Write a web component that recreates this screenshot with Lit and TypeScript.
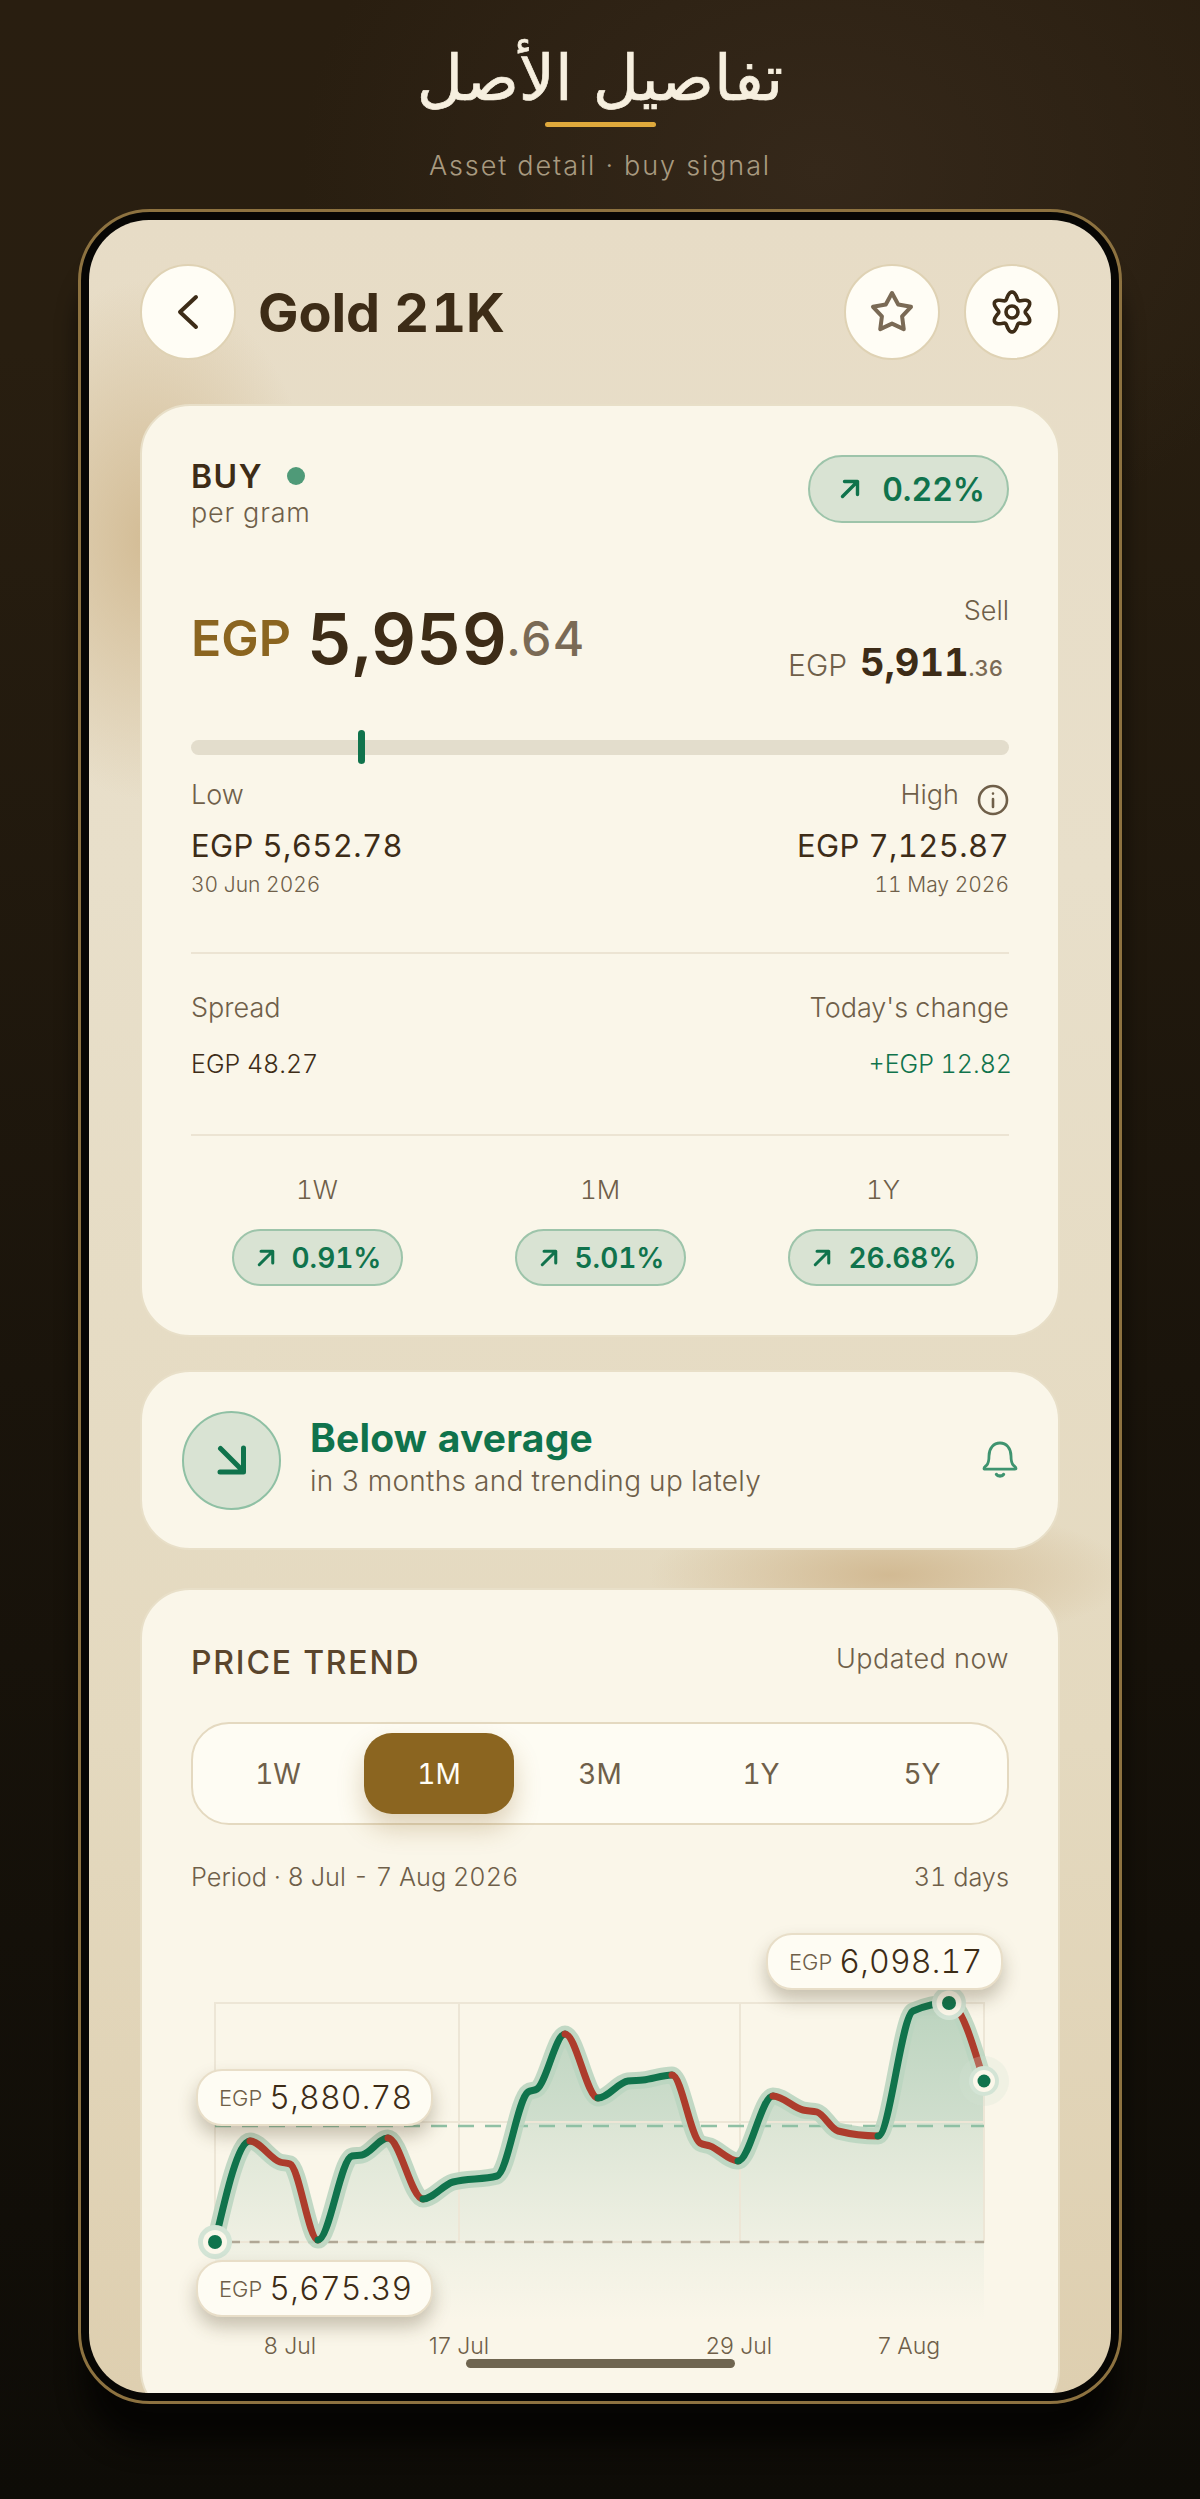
import { customElement } from "lit/decorators.js";
import { css, html, LitElement, svg } from "lit";

type Pt = [number, number];

// chart coordinates are page pixels, the svg viewBox starts at the chart's corner
const CHART_X = 191;
const CHART_Y = 1920;
const CHART_W = 818;
const CHART_H = 450;

const PRICE: Pt[] = [
    [215, 2243], [250, 2142], [280, 2163], [290, 2165], [318, 2241], [352, 2157],
    [362, 2156], [388, 2139], [423, 2200], [453, 2183], [497, 2177], [528, 2093],
    [537, 2090], [565, 2035], [598, 2099], [628, 2082], [643, 2081], [672, 2076],
    [700, 2144], [710, 2147], [738, 2162], [773, 2097], [803, 2111], [817, 2113],
    [838, 2132], [878, 2137], [913, 2012], [949, 2004], [984, 2082],
];

const sign = (v: number) => (v < 0 ? -1 : 1);

function tangents(pts: Pt[]): number[] {
    const out: number[] = new Array(pts.length).fill(0);
    for (let i = 1; i < pts.length - 1; i++) {
        const h0 = pts[i][0] - pts[i - 1][0];
        const h1 = pts[i + 1][0] - pts[i][0];
        const s0 = (pts[i][1] - pts[i - 1][1]) / h0;
        const s1 = (pts[i + 1][1] - pts[i][1]) / h1;
        const p = (s0 * h1 + s1 * h0) / (h0 + h1);
        out[i] = (sign(s0) + sign(s1)) * Math.min(Math.abs(s0), Math.abs(s1), 0.5 * Math.abs(p));
    }
    const n = pts.length - 1;
    out[0] = ((3 * (pts[1][1] - pts[0][1])) / (pts[1][0] - pts[0][0]) - out[1]) / 2;
    out[n] = ((3 * (pts[n][1] - pts[n - 1][1])) / (pts[n][0] - pts[n - 1][0]) - out[n - 1]) / 2;
    return out;
}

function curveTo(pts: Pt[], m: number[], i: number): string {
    const [x0, y0] = pts[i];
    const [x1, y1] = pts[i + 1];
    const d = (x1 - x0) / 3;
    return `C${x0 + d} ${y0 + m[i] * d} ${x1 - d} ${y1 - m[i + 1] * d} ${x1} ${y1}`;
}

const slopes = tangents(PRICE);
const fullLine =
    `M${PRICE[0][0]} ${PRICE[0][1]}` +
    PRICE.slice(0, -1).map((_, i) => curveTo(PRICE, slopes, i)).join("");

// one path per rising or falling run
function runs(): { d: string; up: boolean }[] {
    const out: { d: string; up: boolean }[] = [];
    for (let i = 0; i < PRICE.length - 1; i++) {
        const up = PRICE[i + 1][1] < PRICE[i][1];
        const last = out[out.length - 1];
        if (last && last.up === up) last.d += curveTo(PRICE, slopes, i);
        else out.push({ d: `M${PRICE[i][0]} ${PRICE[i][1]}` + curveTo(PRICE, slopes, i), up });
    }
    return out;
}

function gearPath(cx: number, cy: number): string {
    const parts: string[] = [];
    for (let a = 0; a < 360; a += 4) {
        const t = (a * Math.PI) / 180;
        const r = 16.6 + 3.4 * Math.cos(6 * (t - Math.PI / 2));
        parts.push(`${(cx + r * Math.cos(t)).toFixed(2)} ${(cy + r * Math.sin(t)).toFixed(2)}`);
    }
    return `M${parts.join("L")}Z`;
}

function starPoints(cx: number, cy: number, outer: number, inner: number): string {
    const parts: string[] = [];
    for (let i = 0; i < 10; i++) {
        const r = i % 2 ? inner : outer;
        const t = -Math.PI / 2 + (i * Math.PI) / 5;
        parts.push(`${(cx + r * Math.cos(t)).toFixed(2)},${(cy + r * Math.sin(t)).toFixed(2)}`);
    }
    return parts.join(" ");
}

const arrowUp = html`<svg class="arrow" viewBox="0 0 20 20" fill="none" stroke="currentColor" stroke-width="3.4" stroke-linecap="round" stroke-linejoin="round"><path d="M2.5 17.5 17.5 2.5M4.5 2.5h13v13"/></svg>`;

const dot = (x: number, y: number, inner: number, ring: number, halo: number) => svg`
    <circle cx=${x} cy=${y} r=${halo} fill="#d3e4d5"/>
    <circle cx=${x} cy=${y} r=${ring} fill="#fbf7ea"/>
    <circle cx=${x} cy=${y} r=${inner} fill="#10734c"/>
`;

@customElement("app-root")
class AppRoot extends LitElement {
    static get styles() {
        return css`
            :host {
                display: block;
                height: 2499px;
                overflow: hidden;
                font-family: Inter, "Liberation Sans", sans-serif;
                font-feature-settings: "tnum";
                color: #3d2c17;
                background:
                    radial-gradient(520px 400px at 820px 170px, #35281a 0%, rgba(53, 40, 26, 0) 100%),
                    linear-gradient(180deg, #291e10 0%, #281e10 14%, #1a140b 55%, #0e0c07 100%);
            }

            .intro {
                height: 209px;
                text-align: center;
                box-sizing: border-box;
                padding-top: 35px;
            }

            .intro h1 {
                margin: 0;
                font: 400 63.5px/87px "DejaVu Sans", "Noto Sans", sans-serif;
                -webkit-text-stroke: 0.7px #f6efdf;
                color: #f6efdf;
            }

            .intro .rule {
                width: 111px;
                height: 5px;
                margin: 0 auto;
                border-radius: 3px;
                background: #dfa93c;
            }

            .intro p {
                margin: 22px 0 0;
                font-size: 27px;
                font-weight: 300;
                line-height: 34px;
                letter-spacing: 1.9px;
                color: #a89a80;
            }

            .phone {
                margin: 0 78px;
                padding: 8px;
                border: 3px solid #8d7240;
                border-radius: 72px;
                background: #070604;
                box-shadow: 0 46px 26px -6px #060503;
            }

            .screen {
                position: relative;
                height: 2173px;
                box-sizing: border-box;
                padding: 45px 51px 0;
                overflow: hidden;
                border-radius: 60px;
                background:
                    radial-gradient(170px 260px at 60px 320px, #d3bc95 0%, rgba(211, 188, 149, 0) 100%),
                    radial-gradient(240px 70px at 800px 1355px, #d2ba93 0%, rgba(210, 186, 147, 0) 100%),
                    linear-gradient(180deg, #e7dcc6 0%, #e8dfca 30%, #e4d9bf 70%, #decfb0 100%);
            }

            .top {
                display: flex;
                align-items: center;
                gap: 24px;
                height: 94px;
            }

            .top h2 {
                flex: 1;
                margin: 0 0 0 -2px;
                font-size: 54px;
                font-weight: 700;
                letter-spacing: -0.1px;
            }

            .top h2 span {
                margin-left: 2px;
            }

            .round {
                display: flex;
                align-items: center;
                justify-content: center;
                flex: none;
                width: 96px;
                height: 96px;
                box-sizing: border-box;
                border: 2px solid #dfd2b4;
                border-radius: 50%;
                background: #fffdf5;
            }

            .card {
                box-sizing: border-box;
                padding: 49px 49px;
                border: 2px solid #e8dfc8;
                border-radius: 50px;
                background: #faf6e9;
            }

            .summary {
                margin-top: 45px;
                height: 933px;
            }

            .row {
                display: flex;
                justify-content: space-between;
            }

            .head-row {
                height: 68px;
            }

            .buy {
                font-size: 32px;
                font-weight: 600;
                line-height: 38px;
                letter-spacing: 1.5px;
                margin-top: 3px;
            }

            .buy i {
                display: inline-block;
                width: 18px;
                height: 18px;
                margin-left: 24px;
                border-radius: 50%;
                background: #4f9a78;
                vertical-align: 3px;
            }

            .muted {
                font-size: 27px;
                font-weight: 300;
                line-height: 32px;
                color: #6f5f49;
            }

            .per {
                letter-spacing: 0.8px;
                margin-top: 1px;
            }

            .badge {
                display: inline-flex;
                align-items: center;
                box-sizing: border-box;
                border: 2px solid #9dc4aa;
                border-radius: 34px;
                background: #d9e3d3;
                color: #10734c;
                font-weight: 600;
            }

            .badge.large {
                height: 68px;
                gap: 22px;
                padding: 0 22px 0 30px;
                font-size: 32px;
            }

            .badge.large .arrow {
                width: 20px;
                height: 20px;
            }

            .badge.small {
                height: 57px;
                gap: 17px;
                padding: 0 19px 0 23px;
                font-size: 28px;
            }

            .badge.small .arrow {
                width: 18px;
                height: 18px;
            }

            .price-row {
                margin-top: 72px;
                align-items: flex-start;
            }

            .price {
                display: flex;
                align-items: center;
                height: 84px;
                margin-top: 1px;
            }

            .price .cur {
                font-size: 50px;
                font-weight: 600;
                color: #8b6520;
                margin-right: 16px;
            }

            .price .big {
                font-size: 70px;
                font-weight: 560;
            }

            .price .dec {
                font-size: 48px;
                font-weight: 500;
                letter-spacing: 1px;
                color: #7a6a55;
            }

            .sell {
                text-align: right;
            }

            .sell-value {
                display: flex;
                align-items: baseline;
                justify-content: flex-end;
                margin-top: 15px;
                padding-right: 6px;
                line-height: 40px;
            }

            .sell-value .cur {
                margin-right: 13px;
                font-size: 30px;
                font-weight: 300;
                color: #6f5f49;
            }

            .sell-value .big {
                font-size: 38px;
                font-weight: 700;
            }

            .sell-value .dec {
                font-size: 22px;
                font-weight: 500;
                color: #7a6a55;
            }

            .track {
                position: relative;
                height: 15px;
                margin-top: 52px;
                border-radius: 8px;
                background: #e3ddcc;
            }

            .track i {
                position: absolute;
                left: 167px;
                top: -10px;
                width: 7px;
                height: 34px;
                border-radius: 4px;
                background: #10734c;
            }

            .range {
                margin-top: 24px;
            }

            .range .end {
                text-align: right;
            }

            .label {
                display: flex;
                align-items: center;
                justify-content: flex-end;
                gap: 18px;
                height: 32px;
            }

            .label svg {
                margin-top: 10px;
            }

            .range .side:first-child .label {
                justify-content: flex-start;
            }

            .value {
                margin-top: 15px;
                font-size: 31px;
                line-height: 40px;
                font-weight: 400;
                letter-spacing: 0.4px;
            }

            .date {
                margin-top: 5px;
                font-size: 21px;
                font-weight: 300;
                line-height: 28px;
                color: #6f5f49;
            }

            hr {
                margin: 0;
                border: 0;
                height: 2px;
                background: #ece4d3;
            }

            .first-rule {
                margin-top: 53px;
            }

            .spread {
                height: 180px;
                box-sizing: border-box;
                padding-top: 38px;
            }

            .spread .amount {
                margin-top: 24px;
                font-size: 25px;
                font-weight: 300;
                line-height: 32px;
            }

            .spread .gain {
                color: #10734c;
                margin-right: -3px;
            }

            .periods {
                display: grid;
                grid-template-columns: repeat(3, 252px);
                gap: 31px;
                margin-top: 38px;
                text-align: center;
            }

            .periods .muted {
                margin-bottom: 23px;
                font-size: 26px;
            }

            .signal {
                display: flex;
                align-items: center;
                height: 180px;
                margin-top: 33px;
                padding: 0 40px;
            }

            .signal .disc {
                display: flex;
                align-items: center;
                justify-content: center;
                flex: none;
                width: 99px;
                height: 99px;
                box-sizing: border-box;
                border: 2px solid #8fc0a4;
                border-radius: 50%;
                background: #d9e3d3;
            }

            .signal .text {
                flex: 1;
                margin: 0 0 9px 29px;
            }

            .signal strong {
                display: block;
                font-size: 39px;
                font-weight: 700;
                line-height: 46px;
                letter-spacing: 0.2px;
                color: #10734c;
            }

            .signal .muted {
                margin-top: 4px;
                font-size: 28px;
                letter-spacing: 0.3px;
            }

            .trend {
                margin-top: 38px;
            }

            .trend-head {
                align-items: flex-start;
                margin-top: 4px;
            }

            .trend-head h3 {
                margin: 0;
                font-size: 32px;
                font-weight: 500;
                line-height: 40px;
                letter-spacing: 1.8px;
                color: #5a452c;
            }

            .trend-head .muted {
                letter-spacing: 0.5px;
            }

            .periods-bar {
                display: grid;
                grid-template-columns: repeat(5, 1fr);
                gap: 11px;
                height: 103px;
                box-sizing: border-box;
                margin-top: 39px;
                padding: 9px 10px;
                border: 2px solid #e4d9c0;
                border-radius: 38px;
                background: #fefcf3;
            }

            .periods-bar span {
                display: flex;
                align-items: center;
                justify-content: center;
                border-radius: 28px;
                font-size: 28px;
                font-weight: 400;
                color: #6f5f49;
            }

            .periods-bar span.on {
                background: #8b6520;
                color: #fffdf5;
                box-shadow: 0 14px 26px rgba(139, 101, 32, 0.28);
            }

            .period-row {
                margin-top: 36px;
            }

            .period-row .muted {
                font-size: 25.3px;
            }

            .chart {
                position: relative;
                margin-top: 26px;
                height: 450px;
            }

            .chart svg {
                display: block;
            }

            .chart text {
                font-family: Inter, "Liberation Sans", sans-serif;
                font-feature-settings: normal;
                font-size: 23px;
                font-weight: 300;
                fill: #6f5f49;
                text-anchor: middle;
            }

            .tag {
                position: absolute;
                display: flex;
                align-items: center;
                gap: 7px;
                width: 237px;
                height: 57px;
                box-sizing: border-box;
                padding-left: 21px;
                border: 2px solid #e8dec8;
                border-radius: 26px;
                background: #fefcf3;
                box-shadow: 0 10px 18px rgba(70, 55, 25, 0.28);
                font-size: 32px;
                font-weight: 300;
                letter-spacing: 0.2px;
                white-space: nowrap;
            }

            .tag small {
                font-size: 22px;
                font-weight: 300;
                letter-spacing: 0;
                color: #6f5f49;
            }

            .home {
                position: absolute;
                left: 377px;
                bottom: 25px;
                width: 269px;
                height: 9px;
                border-radius: 5px;
                background: #6f6550;
            }
        `;
    }

    private tag(x: number, y: number, amount: string) {
        return html`<div class="tag" style="left:${x - CHART_X}px;top:${y - CHART_Y}px"><small>EGP</small>${amount}</div>`;
    }

    private renderChart() {
        const area = `${fullLine}L984 2322L215 2322Z`;
        return html`
            <div class="chart">
                <svg width=${CHART_W} height=${CHART_H} viewBox="${CHART_X} ${CHART_Y} ${CHART_W} ${CHART_H}" fill="none">
                    <defs>
                        <linearGradient id="fade" gradientUnits="userSpaceOnUse" x1="0" y1="2004" x2="0" y2="2322">
                            <stop offset="0" stop-color="#bcd4bf"/>
                            <stop offset="0.37" stop-color="#cfdecd"/>
                            <stop offset="0.385" stop-color="#dce5d5"/>
                            <stop offset="0.75" stop-color="#eff0e3"/>
                            <stop offset="1" stop-color="#faf6e9"/>
                        </linearGradient>
                    </defs>
                    <path d=${area} fill="url(#fade)"/>
                    <path d="M215 2004H984V2243H215ZM459 2004V2243M740 2004V2243M215 2123H984" stroke="#ede6d6" stroke-width="2"/>
                    <path d="M215 2127H984" stroke="#8fc0a4" stroke-width="2.5" stroke-dasharray="16 11"/>
                    <path d="M230 2243H984" stroke="#b0a795" stroke-width="2.5" stroke-dasharray="10 9.6"/>
                    <path d=${fullLine} stroke="#bad5c0" stroke-opacity="0.9" stroke-width="17" stroke-linecap="round" stroke-linejoin="round"/>
                    ${runs().map(
                        (r) => svg`<path d=${r.d} stroke=${r.up ? "#10734c" : "#ad3c2c"} stroke-width="7" stroke-linecap="round"/>`
                    )}
                    <circle cx="984" cy="2082" r="25" fill="#d3e4d5" fill-opacity="0.25"/>
                    ${dot(215, 2243, 7, 12, 17)}
                    ${dot(949, 2004, 7, 12.5, 17)}
                    ${dot(984, 2082, 6.5, 11, 15)}
                    <text x="290" y="2355">8 Jul</text>
                    <text x="459" y="2355">17 Jul</text>
                    <text x="739" y="2355">29 Jul</text>
                    <text x="909" y="2355">7 Aug</text>
                </svg>
                ${this.tag(196, 2070, "5,880.78")}
                ${this.tag(196, 2261, "5,675.39")}
                ${this.tag(766, 1934, "6,098.17")}
            </div>
        `;
    }

    protected render() {
        return html`
            <div class="intro">
                <h1 lang="ar" dir="rtl">تفاصيل الأصل</h1>
                <div class="rule"></div>
                <p>Asset detail · buy signal</p>
            </div>
            <div class="phone">
                <div class="screen">
                    <div class="top">
                        <div class="round">
                            <svg width="28" height="40" viewBox="0 0 28 40" fill="none" stroke="#3d2c17" stroke-width="4" stroke-linecap="round" stroke-linejoin="round"><path d="M22 5 6 20l16 15"/></svg>
                        </div>
                        <h2>Gold 2<span>1</span>K</h2>
                        <div class="round">
                            <svg width="48" height="48" viewBox="0 0 48 48" fill="none" stroke="#7a6a55" stroke-width="4" stroke-linejoin="round"><polygon points=${starPoints(24, 25, 20, 10.6)}/></svg>
                        </div>
                        <div class="round">
                            <svg width="48" height="48" viewBox="0 0 48 48" fill="none" stroke="#3d2c17" stroke-width="3.6"><path d=${gearPath(24, 24)}/><circle cx="24" cy="24" r="6"/></svg>
                        </div>
                    </div>

                    <div class="card summary">
                        <div class="row head-row">
                            <div>
                                <div class="buy">BUY<i></i></div>
                                <div class="muted per">per gram</div>
                            </div>
                            <span class="badge large">${arrowUp}0.22%</span>
                        </div>
                        <div class="row price-row">
                            <div class="price">
                                <span class="cur">EGP</span><span class="big">5,959</span><span class="dec">.64</span>
                            </div>
                            <div class="sell">
                                <div class="muted">Sell</div>
                                <div class="sell-value">
                                    <span class="cur">EGP</span><span class="big">5,911</span><span class="dec">.36</span>
                                </div>
                            </div>
                        </div>
                        <div class="track"><i></i></div>
                        <div class="row range">
                            <div class="side">
                                <div class="label muted">Low</div>
                                <div class="value">EGP 5,652.78</div>
                                <div class="date">30 Jun 2026</div>
                            </div>
                            <div class="side end">
                                <div class="label muted">
                                    High
                                    <svg width="32" height="32" viewBox="0 0 32 32" fill="none" stroke="#6f5f49" stroke-width="2.6" stroke-linecap="round"><circle cx="16" cy="16" r="14"/><path d="M16 15v8M16 9.500v.1"/></svg>
                                </div>
                                <div class="value">EGP 7,125.87</div>
                                <div class="date">11 May 2026</div>
                            </div>
                        </div>
                        <hr class="first-rule" />
                        <div class="spread">
                            <div class="row">
                                <div class="muted">Spread</div>
                                <div class="muted">Today's change</div>
                            </div>
                            <div class="row amount">
                                <div>EGP 48.27</div>
                                <div class="gain">+EGP 12.82</div>
                            </div>
                        </div>
                        <hr />
                        <div class="periods">
                            ${[["1W", "0.91%"], ["1M", "5.01%"], ["1Y", "26.68%"]].map(
                                ([name, pct]) => html`
                                    <div>
                                        <div class="muted">${name}</div>
                                        <span class="badge small">${arrowUp}${pct}</span>
                                    </div>
                                `
                            )}
                        </div>
                    </div>

                    <div class="card signal">
                        <div class="disc">
                            <svg width="30" height="30" viewBox="0 0 30 30" fill="none" stroke="#10734c" stroke-width="5" stroke-linecap="round" stroke-linejoin="round"><path d="M3.500 3.500 25 25M3 27h23.500V3"/></svg>
                        </div>
                        <div class="text">
                            <strong>Below average</strong>
                            <div class="muted">in 3 months and trending up lately</div>
                        </div>
                        <svg width="36" height="38" viewBox="0 0 36 38" fill="none" stroke="#3f9470" stroke-width="2.8" stroke-linecap="round" stroke-linejoin="round"><path d="M2 27.500c0-1.400 1.400-2 2.600-3.200C6.600 22.300 7 19 7 15 7 7.500 11.500 2 18 2s11 5.500 11 13c0 4 .4 7.300 2.400 9.300 1.200 1.200 2.600 1.800 2.600 3.200 0 .5-.4.7-1 .7H3c-.6 0-1-.2-1-.7Z"/><path d="M14.500 33.500c1.200 2 5.800 2 7 0" stroke-width="3.400"/></svg>
                    </div>

                    <div class="card trend">
                        <div class="row trend-head">
                            <h3>PRICE TREND</h3>
                            <div class="muted">Updated now</div>
                        </div>
                        <div class="periods-bar">
                            <span>1W</span><span class="on">1M</span><span>3M</span><span>1Y</span><span>5Y</span>
                        </div>
                        <div class="row period-row">
                            <div class="muted">Period · 8 Jul - 7 Aug 2026</div>
                            <div class="muted">31 days</div>
                        </div>
                        ${this.renderChart()}
                    </div>

                    <div class="home"></div>
                </div>
            </div>
        `;
    }
}

export default AppRoot;
